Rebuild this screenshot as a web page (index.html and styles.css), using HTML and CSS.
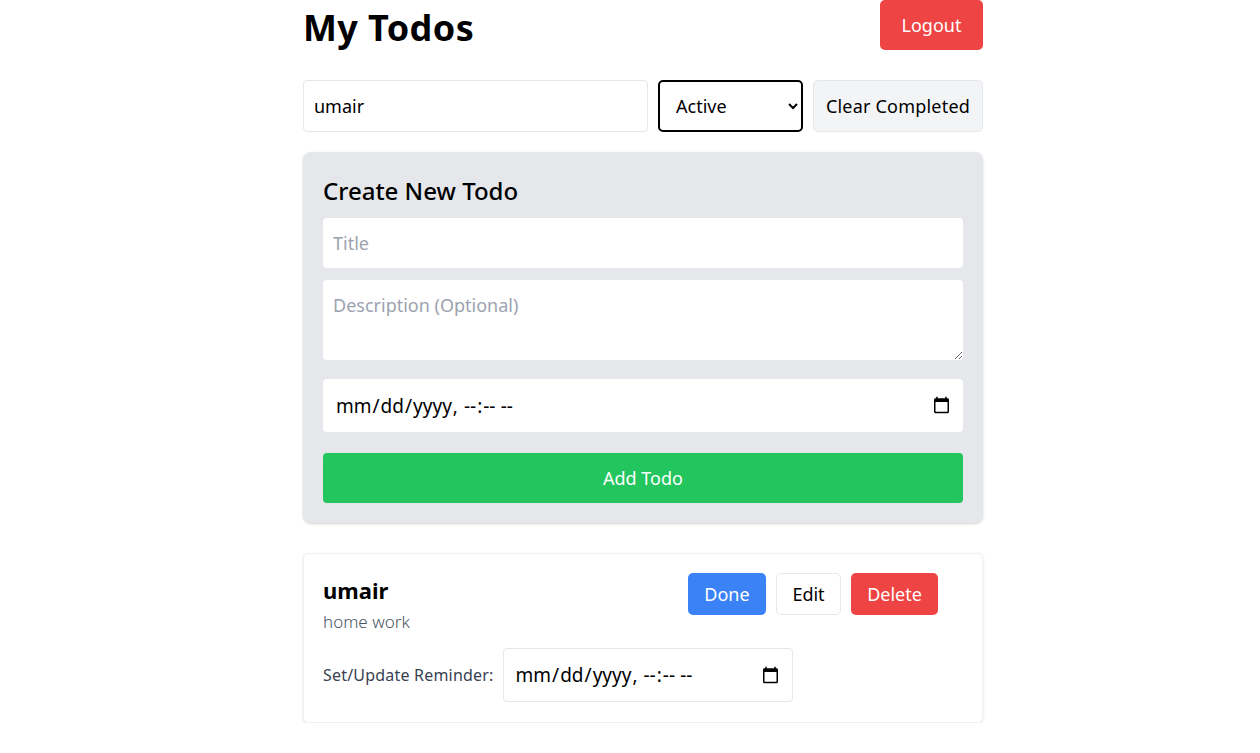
FILE: index.html
```html
<!DOCTYPE html>
<html lang="en">
<head>
<meta charset="utf-8">
<title>My Todos</title>
<link rel="stylesheet" href="styles.css">
</head>
<body>
<div class="page">
  <div class="container">
    <header class="header">
      <h1 class="title">My Todos</h1>
      <button class="btn btn-red btn-logout">Logout</button>
    </header>

    <div class="filters">
      <input class="field search" type="text" value="umair">
      <select class="filter-select">
        <option>All</option>
        <option selected>Active</option>
        <option>Completed</option>
      </select>
      <button class="btn btn-light">Clear Completed</button>
    </div>

    <section class="create-card">
      <h2 class="create-title">Create New Todo</h2>
      <input class="field create-field" type="text" placeholder="Title">
      <textarea class="field create-field create-desc" placeholder="Description (Optional)"></textarea>
      <input class="field create-field create-date" type="datetime-local">
      <button class="btn btn-green btn-add">Add Todo</button>
    </section>

    <section class="todo-card">
      <div class="todo-top">
        <div class="todo-text">
          <h3 class="todo-title">umair</h3>
          <p class="todo-desc">home work</p>
        </div>
        <div class="todo-actions">
          <button class="btn btn-blue btn-sm btn-done">Done</button>
          <button class="btn btn-outline btn-sm btn-edit">Edit</button>
          <button class="btn btn-red btn-sm btn-delete">Delete</button>
        </div>
      </div>
      <div class="reminder">
        <label class="reminder-label">Set/Update Reminder:</label>
        <input class="field reminder-date" type="datetime-local">
      </div>
    </section>
  </div>
</div>
</body>
</html>
```

FILE: styles.css
```css
* { box-sizing: border-box; }

body {
  margin: 0;
  background: #ffffff;
  font-family: "Noto Sans", "Open Sans", sans-serif;
  color: #000;
}

.page {
  display: flex;
  justify-content: center;
  padding-left: 26px;
}

.container {
  width: 680px;
}

.header {
  display: flex;
  justify-content: space-between;
  align-items: flex-start;
  height: 50px;
}

.title {
  margin: 0;
  font-size: 36px;
  font-weight: 700;
  line-height: 56px;
  letter-spacing: 0.4px;
}

.btn {
  font-family: inherit;
  font-size: 18px;
  border: none;
  border-radius: 5px;
  cursor: pointer;
  padding: 0 20px;
}

.btn-red { background: #ef4444; color: #fff; }
.btn-blue { background: #3b82f6; color: #fff; }
.btn-green { background: #22c55e; color: #fff; }

.btn-logout {
  height: 50px;
  width: 103px;
}

.btn-light {
  background: #f3f4f6;
  border: 1px solid #e5e7eb;
  color: #000;
  padding: 0 8px;
  width: 170px;
  letter-spacing: 0.2px;
}

.btn-outline {
  background: #fff;
  border: 1px solid #e5e7eb;
  color: #000;
}

.filters {
  display: flex;
  gap: 10px;
  margin-top: 30px;
  height: 52px;
}

.field {
  font-family: inherit;
  font-size: 18px;
  border: 1px solid #e5e7eb;
  border-radius: 4px;
  background: #fff;
  color: #000;
  padding: 0 10px;
}

.field::placeholder { color: #9ca3af; }

.search {
  width: 345px;
  height: 52px;
}

.filter-select {
  width: 145px;
  height: 52px;
  font-family: inherit;
  font-size: 18px;
  border: 2px solid #000;
  border-radius: 5px;
  background: #fff;
  padding: 0 12px;
  color: #000;
}

.create-card {
  margin-top: 20px;
  background: #e5e7eb;
  border-radius: 8px;
  padding: 20px;
  display: flex;
  flex-direction: column;
  box-shadow: 0 1px 3px rgba(0,0,0,0.12), 0 1px 2px rgba(0,0,0,0.06);
}

.create-title {
  margin: 0;
  font-size: 24px;
  font-weight: 500;
  line-height: 38px;
  height: 46px;
}

.create-field {
  width: 100%;
  border: none;
  height: 50px;
  margin-bottom: 12px;
}

.create-desc {
  height: 80px;
  padding-top: 13px;
  resize: vertical;
  margin-bottom: 19px;
  display: block;
}

.create-date {
  height: 53px;
  margin-bottom: 21px;
  padding-left: 12px;
  font-size: 19px;
}

.btn-add {
  height: 50px;
  width: 100%;
  border-radius: 4px;
}

.todo-card {
  margin-top: 30px;
  background: #fff;
  border: 1px solid #f0f1f3;
  border-radius: 5px;
  padding: 19px 20px 20px 19px;
  box-shadow: 0 1px 3px rgba(0,0,0,0.1);
}

.todo-top {
  display: flex;
  justify-content: space-between;
  align-items: flex-start;
}

.todo-title {
  margin: 2px 0 0;
  font-size: 22px;
  font-weight: 700;
  line-height: 30px;
}

.todo-desc {
  margin: 4px 0 0;
  font-size: 17px;
  font-weight: 300;
  color: #4b5563;
  line-height: 26px;
}

.todo-actions {
  display: flex;
  gap: 10px;
  margin-right: 24px;
}

.btn-sm {
  height: 42px;
  padding: 0;
}

.btn-done { width: 78px; }
.btn-edit { width: 65px; }
.btn-delete { width: 87px; }

.reminder {
  display: flex;
  align-items: center;
  gap: 9px;
  margin-top: 13px;
}

.reminder-label {
  font-size: 16px;
  color: #374151;
  letter-spacing: 0.2px;
}

.reminder-date {
  width: 290px;
  height: 54px;
  padding-left: 11px;
  font-size: 19px;
}
```
